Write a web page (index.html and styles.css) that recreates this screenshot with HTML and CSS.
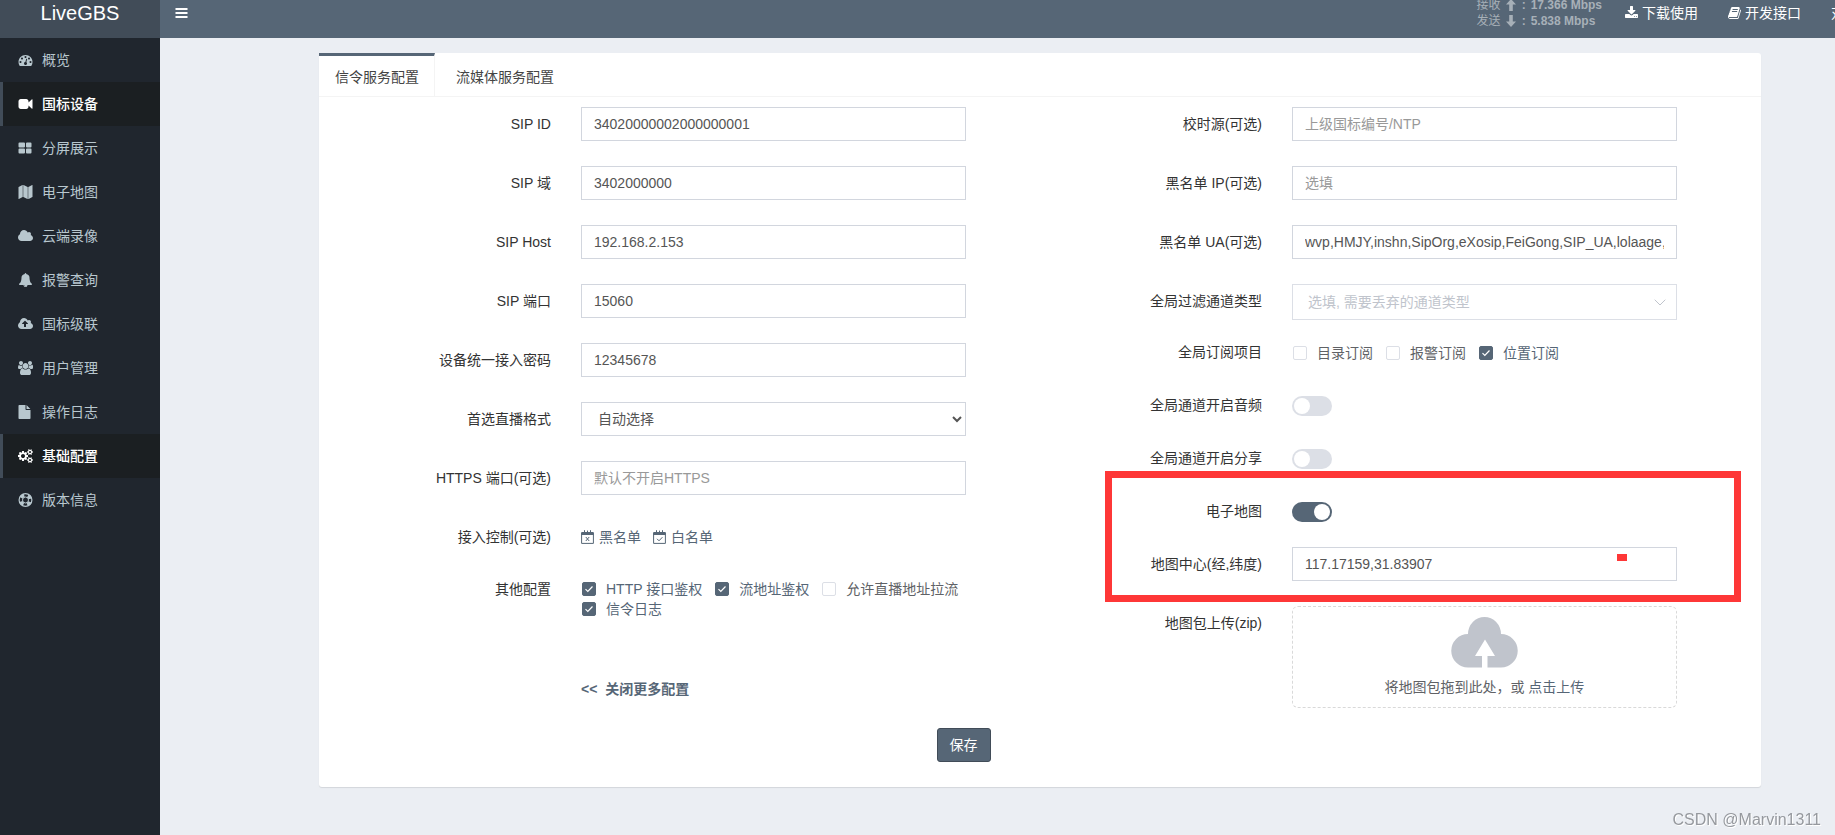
FILE: index.html
```html
<!DOCTYPE html>
<html lang="zh-CN">
<head>
<meta charset="utf-8">
<title>LiveGBS</title>
<link rel="stylesheet" href="styles.css">
</head>
<body>
<header class="header">
  <a class="logo" href="#">LiveGBS</a>
  <nav class="navbar">
    <button class="toggle" type="button" aria-label="菜单"><svg class="icon" viewBox="0 0 13 14"><path d="M.5 2h12v2H.5zM.5 6h12v2H.5zM.5 10h12v2H.5z"/></svg></button>
    <div class="speed">
      <div class="speed-row"><span>接收</span><svg class="arrow" viewBox="0 0 10 12"><path d="M5 0l5 5.500H6.800V12H3.200V5.500H0z"/></svg><span class="colon">:</span><span>17.366 Mbps</span></div>
      <div class="speed-row"><span>发送</span><svg class="arrow" viewBox="0 0 10 12"><path d="M5 12l5-5.500H6.800V0H3.200v6.500H0z"/></svg><span class="colon">:</span><span>5.838 Mbps</span></div>
    </div>
    <a class="nav-link" href="#"><svg class="icon" viewBox="64 0 1664 1792"><path d="M1344 1344q0-26-19-45t-45-19-45 19-19 45 19 45 45 19 45-19 19-45zm256 0q0-26-19-45t-45-19-45 19-19 45 19 45 45 19 45-19 19-45zm128-224v320q0 40-28 68t-68 28h-1472q-40 0-68-28t-28-68v-320q0-40 28-68t68-28h465l135 136q58 56 136 56t136-56l136-136h464q40 0 68 28t28 68zm-325-569q17 41-14 70l-448 448q-18 19-45 19t-45-19l-448-448q-31-29-14-70 17-39 59-39h256v-448q0-26 19-45t45-19h256q26 0 45 19t19 45v448h256q42 0 59 39z"/></svg>下载使用</a>
    <a class="nav-link" href="#"><svg class="icon" viewBox="64 0 1664 1792"><path d="M1703 478q40 57 18 129l-275 906q-19 64-76.500 107.500t-122.500 43.500h-923q-77 0-148.500-53.500t-99.500-131.500q-24-67-2-127 0-4 3-27t4-37q1-8-3-21.500t-3-19.500q2-11 8-21t16.500-23.500 16.500-23.500q23-38 45-91.500t30-91.500q3-10 .5-30t-.5-28q3-11 17-28t17-23q21-36 42-92t25-90q1-9-2.500-32t.5-28q4-13 22-30.500t22-22.500q19-26 42.500-84.500t27.500-96.500q1-8-3-25.500t-2-26.500q2-8 9-18t18-23 17-21q8-12 16.500-30.500t15-35 16-36 19.500-32 26.500-23.500 36-11.500 47.500 5.500l-1 3q38-9 51-9h761q74 0 114 56t18 130l-274 906q-36 119-71.500 153.500t-128.500 34.500h-869q-27 0-38 15-11 16-1 43 24 70 144 70h923q29 0 56-15.500t35-41.500l300-987q7-22 5-57 38 15 59 43zm-1064 2q-4 13 2 22.500t20 9.500h608q13 0 25.500-9.500t16.500-22.500l21-64q4-13-2-22.500t-20-9.500h-608q-13 0-25.500 9.500t-16.500 22.500zm-83 256q-4 13 2 22.500t20 9.500h608q13 0 25.500-9.500t16.500-22.500l21-64q4-13-2-22.500t-20-9.500h-608q-13 0-25.500 9.500t-16.500 22.500z"/></svg>开发接口</a>
    <a class="nav-link nav-cut" href="#">对</a>
  </nav>
</header>

<div class="layout">
  <aside class="sidebar">
    <a class="item" href="#"><svg class="icon" viewBox="0 0 1792 1792"><path d="M384 1152q0-53-37.500-90.500t-90.500-37.500-90.500 37.500-37.500 90.500 37.500 90.500 90.500 37.500 90.500-37.500 37.500-90.500zm192-448q0-53-37.500-90.500t-90.500-37.500-90.500 37.500-37.500 90.500 37.500 90.500 90.500 37.500 90.500-37.500 37.500-90.500zm428 481l101-382q6-26-7.500-48.500t-38.500-29.500-48 6.500-30 39.500l-101 382q-60 5-107 43.500t-63 98.500q-20 77 20 146t117 89 146-20 89-117q16-60-6-117t-72-91zm660-33q0-53-37.500-90.500t-90.500-37.500-90.500 37.500-37.500 90.500 37.500 90.500 90.500 37.500 90.500-37.500 37.500-90.500zm-640-640q0-53-37.500-90.500t-90.500-37.500-90.500 37.500-37.500 90.500 37.500 90.500 90.500 37.500 90.500-37.500 37.500-90.500zm448 192q0-53-37.500-90.500t-90.500-37.500-90.500 37.500-37.500 90.500 37.500 90.500 90.500 37.500 90.500-37.500 37.500-90.500zm320 448q0 261-141 483-19 29-54 29h-1402q-35 0-54-29-141-221-141-483 0-182 71-348t191-286 286-191 348-71 348 71 286 191 191 286 71 348z"/></svg>概览</a>
    <a class="item active" href="#"><svg class="icon" viewBox="0 0 1792 1792"><path d="M1792 352v1088q0 42-39 59-13 5-25 5-27 0-45-19l-403-403v166q0 119-84.500 203.500t-203.500 84.500h-704q-119 0-203.500-84.500t-84.500-203.500v-704q0-119 84.500-203.500t203.500-84.500h704q119 0 203.500 84.500t84.500 203.500v165l403-402q18-19 45-19 12 0 25 5 39 17 39 59z"/></svg>国标设备</a>
    <a class="item" href="#"><svg class="icon" viewBox="0 0 14 14"><path d="M1 1.500h4.500a1 1 0 0 1 1 1v3a1 1 0 0 1-1 1H1a1 1 0 0 1-1-1v-3a1 1 0 0 1 1-1zm7.500 0H12a1 1 0 0 1 1 1v3a1 1 0 0 1-1 1H8.500a1 1 0 0 1-1-1v-3a1 1 0 0 1 1-1zM1 7.500h4.500a1 1 0 0 1 1 1v3a1 1 0 0 1-1 1H1a1 1 0 0 1-1-1v-3a1 1 0 0 1 1-1zm7.500 0H12a1 1 0 0 1 1 1v3a1 1 0 0 1-1 1H8.500a1 1 0 0 1-1-1v-3a1 1 0 0 1 1-1z"/></svg>分屏展示</a>
    <a class="item" href="#"><svg class="icon" viewBox="0 0 1792 1792"><path d="M512 0q13 0 22.500 9.500t9.500 22.500v1472q0 20-17 28l-480 256q-7 4-15 4-13 0-22.500-9.500t-9.500-22.500v-1472q0-20 17-28l480-256q7-4 15-4zm1248 0q13 0 22.500 9.500t9.500 22.500v1472q0 20-17 28l-480 256q-7 4-15 4-13 0-22.500-9.500t-9.500-22.500v-1472q0-20 17-28l480-256q7-4 15-4zm-1120 0q8 0 14 3l512 256q18 10 18 29v1472q0 13-9.500 22.500t-22.500 9.500q-8 0-14-3l-512-256q-18-10-18-29v-1472q0-13 9.500-22.500t22.500-9.500z"/></svg>电子地图</a>
    <a class="item" href="#"><svg class="icon" viewBox="64 0 1920 1792"><path d="M1984 1152q0 159-112.500 271.500t-271.500 112.500h-1088q-185 0-316.500-131.500t-131.500-316.500q0-132 71-241.500t187-163.500q-2-28-2-43 0-212 150-362t362-150q158 0 286.500 88t187.500 230q70-62 166-62 106 0 181 75t75 181q0 75-41 138 129 30 213 134.500t84 239.500z"/></svg>云端录像</a>
    <a class="item" href="#"><svg class="icon" viewBox="0 0 1792 1792"><path d="M912 1696q0-16-16-16-59 0-101.500-42.500t-42.500-101.500q0-16-16-16t-16 16q0 73 51.500 124.500t124.500 51.500q16 0 16-16zm816-288q0 52-38 90t-90 38h-448q0 106-75 181t-181 75-181-75-75-181h-448q-52 0-90-38t-38-90q50-42 91-88t85-119.500 74.500-158.500 50-206 19.500-260q0-152 117-282.500t307-158.500q-8-19-8-39 0-40 28-68t68-28 68 28 28 68q0 20-8 39 190 28 307 158.500t117 282.500q0 139 19.500 260t50 206 74.500 158.500 85 119.500 91 88z"/></svg>报警查询</a>
    <a class="item" href="#"><svg class="icon" viewBox="64 0 1920 1792"><path d="M1344 864q0-14-9-23l-352-352q-9-9-23-9t-23 9l-351 351q-10 12-10 24 0 14 9 23t23 9h224v352q0 13 9.500 22.500t22.500 9.500h192q13 0 22.500-9.500t9.500-22.500v-352h224q13 0 22.500-9.500t9.500-22.500zm640 288q0 159-112.500 271.500t-271.500 112.500h-1088q-185 0-316.500-131.500t-131.500-316.500q0-130 70-240t188-165q-2-30-2-43 0-212 150-362t362-150q156 0 285.500 87t188.500 231q71-62 166-62 106 0 181 75t75 181q0 76-41 138 130 31 213.500 135.500t83.500 238.500z"/></svg>国标级联</a>
    <a class="item" href="#"><svg class="icon" viewBox="64 0 1920 1792"><path d="M657 896q-162 5-265 128h-134q-82 0-138-40.500t-56-118.500q0-353 124-353 6 0 43.500 21t97.500 42.500 119 21.500q67 0 133-23-5 37-5 66 0 159 93 283zm1071 637q0 120-73 189.500t-194 69.500h-874q-121 0-194-69.500t-73-189.500q0-53 3.500-103.500t14-109 26.500-108.500 43-97.500 62-81 85.500-53.500 111.500-20q10 0 43 21.500t73 48 107 48 135 21.500 135-21.500 107-48 73-48 43-21.500q61 0 111.500 20t85.500 53.500 62 81 43 97.500 26.500 108.500 14 109 3.500 103.500zm-1024-1277q0 106-75 181t-181 75-181-75-75-181 75-181 181-75 181 75 75 181zm704 384q0 159-112.500 271.500t-271.500 112.500-271.500-112.500-112.500-271.500 112.500-271.500 271.500-112.500 271.500 112.500 112.500 271.500zm576 225q0 78-56 118.500t-138 40.500h-134q-103-123-265-128 93-124 93-283 0-29-5-66 66 23 133 23 59 0 119-21.500t97.500-42.500 43.500-21q124 0 124 353zm-128-609q0 106-75 181t-181 75-181-75-75-181 75-181 181-75 181 75 75 181z"/></svg>用户管理</a>
    <a class="item" href="#"><svg class="icon" viewBox="0 0 14 14"><path d="M.8 0H7v4.200a.8.8 0 0 0 .8.8H12v8.200a.8.8 0 0 1-.8.800H.8a.8.8 0 0 1-.8-.8V.8A.8.8 0 0 1 .8 0zM8 .1L11.900 4H8z"/></svg>操作日志</a>
    <a class="item active" href="#"><svg class="icon" viewBox="-64 0 1920 1792"><path d="M832 896q0-106-75-181t-181-75-181 75-75 181 75 181 181 75 181-75 75-181zm768 512q0-52-38-90t-90-38-90 38-38 90q0 53 37.500 90.500t90.500 37.500 90.500-37.500 37.500-90.500zm0-1024q0-52-38-90t-90-38-90 38-38 90q0 53 37.500 90.500t90.500 37.500 90.500-37.500 37.500-90.500zm-384 421v185q0 10-7 19.500t-16 10.500l-155 24q-11 35-32 76 34 48 90 115 7 11 7 20 0 12-7 19-23 30-82.500 89.500t-78.500 59.500q-11 0-21-7l-115-90q-37 19-77 31-11 108-23 155-7 24-30 24h-186q-11 0-20-7.500t-10-17.500l-23-153q-34-10-75-31l-118 89q-7 7-20 7-11 0-21-8-144-133-144-160 0-9 7-19 10-14 41-53t47-61q-23-44-35-82l-152-24q-10-1-17-9.500t-7-19.500v-185q0-10 7-19.500t16-10.500l155-24q11-35 32-76-34-48-90-115-7-11-7-20 0-12 7-20 22-30 82-89t79-59q11 0 21 7l115 90q34-18 77-32 11-108 23-154 7-24 30-24h186q11 0 20 7.500t10 17.500l23 153q34 10 75 31l118-89q8-7 20-7 11 0 21 8 144 133 144 160 0 8-7 19-12 16-42 54t-45 60q23 48 34 82l152 23q10 2 17 10.500t7 19.500zm640 533v140q0 16-149 31-12 27-30 52 51 113 51 138 0 4-4 7-122 71-124 71-8 0-46-47t-52-68q-20 2-30 2t-30-2q-14 21-52 68t-46 47q-2 0-124-71-4-3-4-7 0-25 51-138-18-25-30-52-149-15-149-31v-140q0-16 149-31 13-29 30-52-51-113-51-138 0-4 4-7 4-2 35-20t59-34 30-16q8 0 46 46.500t52 67.500q20-2 30-2t30 2q51-71 92-112l6-2q4 0 124 70 4 3 4 7 0 25-51 138 17 23 30 52 149 15 149 31zm0-1024v140q0 16-149 31-12 27-30 52 51 113 51 138 0 4-4 7-122 71-124 71-8 0-46-47t-52-68q-20 2-30 2t-30-2q-14 21-52 68t-46 47q-2 0-124-71-4-3-4-7 0-25 51-138-18-25-30-52-149-15-149-31v-140q0-16 149-31 13-29 30-52-51-113-51-138 0-4 4-7 4-2 35-20t59-34 30-16q8 0 46 46.500t52 67.500q20-2 30-2t30 2q51-71 92-112l6-2q4 0 124 70 4 3 4 7 0 25-51 138 17 23 30 52 149 15 149 31z"/></svg>基础配置</a>
    <a class="item" href="#"><svg class="icon ring" viewBox="0 0 14 14"><circle cx="7" cy="7" r="6.400" stroke-width="1.200"/><circle cx="7" cy="7" r="3" stroke-width="1"/><circle cx="7" cy="7" r="4.750" stroke-width="3.500" stroke-dasharray="3.700 3.760" stroke-dashoffset="-1.870"/></svg>版本信息</a>
  </aside>

  <main class="main">
    <form class="card">
      <div class="tabs">
        <a class="tab current" href="#">信令服务配置</a>
        <a class="tab" href="#">流媒体服务配置</a>
      </div>
      <div class="columns">
        <div class="column">
          <div class="row"><label class="label" for="sip-id">SIP ID</label><div class="field"><input class="input" id="sip-id" type="text" value="34020000002000000001"></div></div>
          <div class="row"><label class="label" for="sip-domain">SIP 域</label><div class="field"><input class="input" id="sip-domain" type="text" value="3402000000"></div></div>
          <div class="row"><label class="label" for="sip-host">SIP Host</label><div class="field"><input class="input" id="sip-host" type="text" value="192.168.2.153"></div></div>
          <div class="row"><label class="label" for="sip-port">SIP 端口</label><div class="field"><input class="input" id="sip-port" type="text" value="15060"></div></div>
          <div class="row"><label class="label" for="password">设备统一接入密码</label><div class="field"><input class="input" id="password" type="text" value="12345678"></div></div>
          <div class="row"><label class="label" for="format">首选直播格式</label><div class="field"><select class="input" id="format"><option>自动选择</option></select></div></div>
          <div class="row"><label class="label" for="https">HTTPS 端口(可选)</label><div class="field"><input class="input" id="https" type="text" placeholder="默认不开启HTTPS"></div></div>
          <div class="row">
            <span class="label">接入控制(可选)</span>
            <div class="field links">
              <a class="link" href="#"><svg class="cal" viewBox="0 0 13 14"><path d="M.6 3.500h11.800v9.900H.6zM.6 2.500h11.800v2H.6zM3.500.2v3M6.500.6v2M9.500.2v3M4.800 7l3.400 4M8.200 7l-3.400 4"/></svg>黑名单</a>
              <a class="link" href="#"><svg class="cal" viewBox="0 0 13 14"><path d="M.6 3.500h11.800v9.900H.6zM.6 2.500h11.800v2H.6zM3.500.2v3M6.500.6v2M9.500.2v3M4 8.800l2 2 3.400-3.600"/></svg>白名单</a>
            </div>
          </div>
          <div class="row">
            <span class="label">其他配置</span>
            <div class="field checks">
              <label class="check"><input type="checkbox" checked><span>HTTP 接口鉴权</span></label>
              <label class="check"><input type="checkbox" checked><span>流地址鉴权</span></label>
              <label class="check"><input type="checkbox"><span>允许直播地址拉流</span></label>
              <label class="check"><input type="checkbox" checked><span>信令日志</span></label>
            </div>
          </div>
          <div class="row more-row"><span class="label"></span><div class="field"><button class="more" type="button"><span>&lt;&lt;</span><span>关闭更多配置</span></button></div></div>
        </div>

        <div class="column">
          <div class="row"><label class="label" for="ntp">校时源(可选)</label><div class="field"><input class="input" id="ntp" type="text" placeholder="上级国标编号/NTP"></div></div>
          <div class="row"><label class="label" for="black-ip">黑名单 IP(可选)</label><div class="field"><input class="input" id="black-ip" type="text" placeholder="选填"></div></div>
          <div class="row"><label class="label" for="black-ua">黑名单 UA(可选)</label><div class="field"><input class="input" id="black-ua" type="text" value="wvp,HMJY,inshn,SipOrg,eXosip,FeiGong,SIP_UA,lolaage,"></div></div>
          <div class="row filter-row"><label class="label" for="filter">全局过滤通道类型</label><div class="field"><div class="picker"><select class="picker-select" id="filter"><option>选填, 需要丢弃的通道类型</option></select><svg class="chevron" viewBox="0 0 12 7"><path d="M.7.7L6 6 11.300.7"/></svg></div></div></div>
          <div class="row subscribe-row">
            <span class="label">全局订阅项目</span>
            <div class="field checks">
              <label class="check"><input type="checkbox"><span>目录订阅</span></label>
              <label class="check"><input type="checkbox"><span>报警订阅</span></label>
              <label class="check"><input type="checkbox" checked><span>位置订阅</span></label>
            </div>
          </div>
          <div class="row"><label class="label" for="audio">全局通道开启音频</label><div class="field"><input class="switch" id="audio" type="checkbox"></div></div>
          <div class="row"><label class="label" for="share">全局通道开启分享</label><div class="field"><input class="switch" id="share" type="checkbox"></div></div>
          <div class="map-group">
            <div class="row"><label class="label" for="map">电子地图</label><div class="field"><input class="switch" id="map" type="checkbox" checked></div></div>
            <div class="row"><label class="label" for="center">地图中心(经,纬度)</label><div class="field"><input class="input" id="center" type="text" value="117.17159,31.83907"></div></div>
            <div class="highlight"></div>
            <div class="mark"></div>
          </div>
          <div class="row">
            <span class="label">地图包上传(zip)</span>
            <div class="field">
              <label class="upload">
                <input class="file" type="file">
                <svg class="cloud" viewBox="0 0 67 51"><path d="M17 50.500A16.750 16.750 0 0 1 17 17a16.500 17 0 0 1 33 0 16.750 16.750 0 0 1 0 33.500H36.500V39H44L34 22.500 24 39h7v11.500z"/></svg>
                <span>将地图包拖到此处，或 <em class="pick">点击上传</em></span>
              </label>
            </div>
          </div>
        </div>
      </div>
      <div class="actions"><button class="save" type="submit">保存</button></div>
    </form>
  </main>
</div>
<div class="watermark">CSDN @Marvin1311</div>
</body>
</html>
```

FILE: styles.css
```css
* { box-sizing: border-box; }

body {
  margin: 0;
  min-height: 100vh;
  display: flex;
  flex-direction: column;
  overflow: hidden;
  background: #ebeef3;
  color: #333;
  font: 14px/20px "Liberation Sans", "Noto Sans CJK SC", sans-serif;
}

a { color: inherit; text-decoration: none; }
button, input, select { font: inherit; }

.icon { height: 14px; fill: currentColor; flex: none; }

/* top bar */
.header {
  display: flex;
  height: 50px;
  margin-top: -12px;
  background: #566676;
  color: #fff;
}
.logo {
  width: 160px;
  background: #414c58;
  font-size: 20px;
  line-height: 50px;
  text-align: center;
}
.navbar { flex: 1; display: flex; align-items: center; min-width: 0; white-space: nowrap; }
.toggle {
  display: flex;
  margin-right: auto;
  padding: 15px;
  border: 0;
  background: none;
  color: inherit;
}
.speed { margin-right: 8px; color: #a7b0b8; font-size: 12px; font-weight: bold; line-height: 16px; }
.speed-row { display: flex; align-items: center; }
.speed-row span:first-child { font-weight: normal; }
.arrow { width: 10px; height: 12px; margin: 0 6px 0 5px; fill: currentColor; }
.colon { width: 9px; }
.nav-link { display: flex; align-items: center; gap: 4px; padding: 15px; }
.nav-cut { width: 19px; padding-right: 0; overflow: hidden; }

/* side menu */
.layout { flex: 1; display: flex; }
.sidebar { width: 160px; background: #20262e; color: #b8c7ce; }
.item {
  display: flex;
  align-items: center;
  height: 44px;
  padding-left: 15px;
  border-left: 3px solid transparent;
}
.item .icon { width: 15px; margin-right: 9px; }
.item.active { border-left-color: #414c58; background: #1b1f22; color: #fff; font-weight: 500; }
.ring { fill: none; stroke: currentColor; }

/* settings card */
.main { flex: 1; padding: 15px 74px 48px 159px; }
.card { border-radius: 3px; background: #fff; box-shadow: 0 1px 1px rgba(0, 0, 0, .1); }
.tabs { display: flex; gap: 6px; border-bottom: 1px solid #f4f4f4; }
.tab { padding: 11px 15px 9px; border-top: 3px solid transparent; color: #444; }
.tab.current { padding-left: 16px; border-top-color: #566676; border-right: 1px solid #f4f4f4; }

.columns { display: flex; padding: 10px 10px 0; }
.column { flex: 1; min-width: 0; }
.row { display: flex; min-height: 27px; margin-bottom: 25px; }
.label { width: 33.333%; padding: 7px 15px 0; text-align: right; }
.field { width: 58.333%; padding: 0 15px; }
.input {
  display: block;
  width: 100%;
  height: 34px;
  padding: 6px 12px;
  border: 1px solid #d2d6de;
  border-radius: 0;
  background: #fff;
  color: #555;
}
.input::placeholder { color: #999; }

.links { display: flex; gap: 12px; padding-top: 7px; }
.link { display: flex; align-items: center; gap: 5px; height: 20px; color: #566676; }
.cal { width: 13px; height: 14px; fill: none; stroke: currentColor; stroke-width: 1; }

.checks { display: flex; flex-wrap: wrap; column-gap: 13px; padding: 7px 10px 0 16px; }
.check { display: flex; align-items: center; gap: 10px; color: #606266; }
.check input {
  appearance: none;
  width: 14px;
  height: 14px;
  margin: 0;
  border: 1px solid #dcdfe6;
  border-radius: 2px;
  background: #fff;
}
.check input:checked {
  border-color: #566676;
  background: #566676 url("data:image/svg+xml,%3Csvg xmlns='http://www.w3.org/2000/svg' viewBox='0 0 12 12'%3E%3Cpath d='M2.500 6.200l2.300 2.300 4.700-5' fill='none' stroke='white' stroke-width='1.200'/%3E%3C/svg%3E") center / 12px;
}
.check input:checked + span { color: #566676; }

.more-row { padding-top: 28px; }
.more {
  display: flex;
  gap: 8px;
  padding: 7px 0 0;
  border: 0;
  background: none;
  color: #566676;
  font-weight: bold;
}

.filter-row { margin-bottom: 15px; }
.subscribe-row { min-height: 28px; }
.picker { position: relative; }
.picker-select {
  appearance: none;
  display: block;
  width: 100%;
  height: 36px;
  padding: 0 30px 0 15px;
  border: 1px solid #dcdfe6;
  border-radius: 0;
  background: #fff;
  color: #c0c4cc;
}
.chevron {
  position: absolute;
  top: 15px;
  right: 11px;
  width: 12px;
  height: 7px;
  fill: none;
  stroke: #c0c4cc;
}

.switch {
  appearance: none;
  display: flex;
  width: 40px;
  height: 20px;
  margin: 8px 0 0;
  padding: 2px;
  border-radius: 10px;
  background: #dcdfe6;
}
.switch::before { content: ""; width: 16px; height: 16px; border-radius: 50%; background: #fff; }
.switch:checked { justify-content: flex-end; background: #566676; }

.map-group { position: relative; }
.highlight { position: absolute; top: -23px; right: 10px; bottom: -21px; left: 65px; border: 7px solid #fe3737; pointer-events: none; }
.mark { position: absolute; top: 60px; right: 124px; width: 10px; height: 7px; background: #fe3737; }

.upload {
  display: flex;
  flex-direction: column;
  align-items: center;
  gap: 9px;
  padding: 10px 0;
  border: 1px dashed #d9d9d9;
  border-radius: 6px;
  color: #606266;
}
.file { position: absolute; width: 1px; height: 1px; opacity: 0; }
.cloud { width: 67px; height: 51px; fill: #c0c4cc; }
.pick { color: #566676; font-style: normal; }

.columns .column > .row:last-child { margin-bottom: 0; }
.actions { margin: 0 10px; padding: 20px 0 25px; }
.save {
  display: block;
  margin-left: calc(41.667% + 15px);
  padding: 6px 12px;
  border: 1px solid #414c58;
  border-radius: 3px;
  background: #566676;
  color: #fff;
}

.watermark {
  position: fixed;
  right: 14px;
  bottom: 5px;
  color: #96999e;
  font-size: 16px;
  text-shadow: 1px 1px 0 #fff;
}
```
